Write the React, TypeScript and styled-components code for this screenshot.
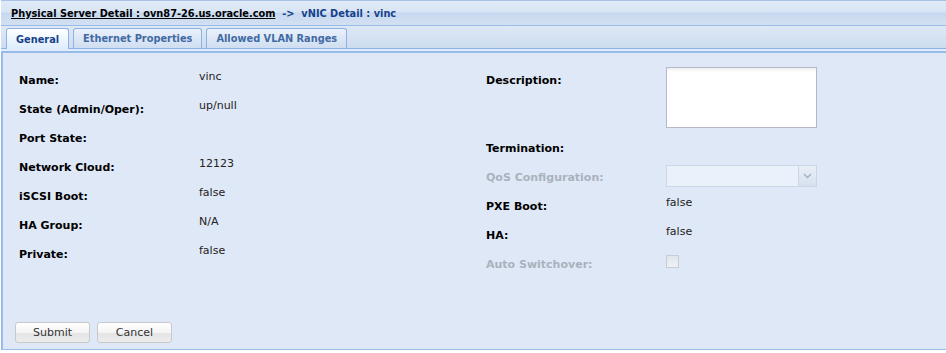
import React from 'react'
import styled, { createGlobalStyle, css } from 'styled-components'

const GlobalStyle = createGlobalStyle`
  html, body {
    margin: 0;
    padding: 0;
    background: #ffffff;
  }
  body {
    font-family: "DejaVu Sans", Verdana, sans-serif;
  }
`

const Page = styled.div`
  width: 946px;
  height: 353px;
  display: flex;
  flex-direction: column;
  overflow: hidden;
`

const Header = styled.div`
  height: 24px;
  border-top: 1px solid #a9c3e6;
  border-bottom: 1px solid #99bbe8;
  margin-left: 1px;
  background: linear-gradient(#e0eaf7 0%, #d9e5f5 45%, #c6d8ef 50%, #d3e0f2 100%);
  display: flex;
  align-items: center;
  padding-left: 10px;
  font-size: 9.8px;
  font-weight: bold;
  white-space: pre;
`

const CrumbLink = styled.a`
  color: #000000;
  text-decoration: underline;
`

const CrumbCurrent = styled.span`
  color: #15428b;
`

const TabStrip = styled.div`
  height: 21px;
  margin-left: 1px;
  padding: 1px 0 0 5px;
  display: flex;
  align-items: flex-end;
  gap: 4px;
  background: linear-gradient(#dfe9f6, #cddcef);
  border-bottom: 1px solid #8db2e3;
`

const Tab = styled.div<{ $active?: boolean }>`
  height: 19px;
  padding: 0 9px;
  display: flex;
  align-items: center;
  font-size: 9.8px;
  font-weight: bold;
  color: #416aa3;
  border: 1px solid #8db2e3;
  border-bottom: none;
  border-radius: 3px 3px 0 0;
  background: linear-gradient(#eaf1fb, #cfdef1);
  ${(p) =>
    p.$active &&
    css`
      color: #15428b;
      background: linear-gradient(#ffffff, #deecfd);
      height: 20px;
      margin-bottom: -1px;
    `}
`

const TabGap = styled.div`
  height: 2px;
  margin-left: 1px;
  background: #deecfd;
  border-bottom: 2px solid #99bbe8;
`

const Body = styled.div`
  flex: 1;
  margin: 0 0 3px 1px;
  border-left: 2px solid #99bbe8;
  border-bottom: 1px solid #99bbe8;
  background: #dfe8f6;
  display: flex;
  flex-direction: column;
  padding: 14px 0 6px 12px;
`

const Columns = styled.div`
  flex: 1;
  display: grid;
  grid-template-columns: 467px 1fr;
`

const Column = styled.div`
  display: flex;
  flex-direction: column;
  padding-left: 4px;
`

const Row = styled.div<{ $height?: number }>`
  display: grid;
  grid-template-columns: 180px 1fr;
  height: ${(p) => p.$height ?? 29}px;
`

const Label = styled.div<{ $disabled?: boolean }>`
  padding-top: 7px;
  font-size: 11px;
  font-weight: bold;
  color: ${(p) => (p.$disabled ? '#a9b2bd' : '#000000')};
`

const Value = styled.div`
  padding-top: 3px;
  font-size: 11px;
  color: #222222;
`

const TextArea = styled.textarea`
  box-sizing: border-box;
  width: 151px;
  height: 61px;
  border: 1px solid #b5b8c8;
  background: #ffffff linear-gradient(#eeeeee, #ffffff 4px);
  resize: none;
  margin: 0;
  outline: none;
`

const Select = styled.div`
  box-sizing: border-box;
  width: 151px;
  height: 22px;
  margin-top: 1px;
  border: 1px solid #cbd7e6;
  background: #eaf1fb;
  display: flex;
  justify-content: flex-end;
`

const SelectTrigger = styled.div`
  width: 17px;
  border-left: 1px solid #cbd7e6;
  background: linear-gradient(#e9eff7, #d6e0ec);
  display: flex;
  align-items: center;
  justify-content: center;
`

const CheckBox = styled.div`
  box-sizing: border-box;
  width: 13px;
  height: 13px;
  margin-top: 4px;
  border: 1px solid #c5cdd6;
  background: linear-gradient(#dfe5ec, #eef2f6);
`

const Buttons = styled.div`
  display: flex;
  gap: 7px;
`

const Button = styled.button`
  box-sizing: border-box;
  width: 75px;
  height: 21px;
  border: 1px solid #c9c9c9;
  border-radius: 3px;
  background: linear-gradient(#ffffff 0%, #f4f4f4 50%, #e4e4e4 51%, #ececec 100%);
  font-family: "DejaVu Sans", Verdana, sans-serif;
  font-size: 11px;
  color: #333333;
  padding: 0;
`

const leftRows = [
  ['Name:', 'vinc'],
  ['State (Admin/Oper):', 'up/null'],
  ['Port State:', ''],
  ['Network Cloud:', '12123'],
  ['iSCSI Boot:', 'false'],
  ['HA Group:', 'N/A'],
  ['Private:', 'false'],
]

export default function App() {
  return (
    <Page>
      <GlobalStyle />
      <Header>
        <CrumbLink>Physical Server Detail : ovn87-26.us.oracle.com</CrumbLink>
        <CrumbCurrent>{'  ->  vNIC Detail : vinc'}</CrumbCurrent>
      </Header>
      <TabStrip>
        <Tab $active>General</Tab>
        <Tab>Ethernet Properties</Tab>
        <Tab>Allowed VLAN Ranges</Tab>
      </TabStrip>
      <TabGap />
      <Body>
        <Columns>
          <Column>
            {leftRows.map(([label, value]) => (
              <Row key={label}>
                <Label>{label}</Label>
                <Value>{value}</Value>
              </Row>
            ))}
          </Column>
          <Column>
            <Row $height={68}>
              <Label>Description:</Label>
              <div>
                <TextArea />
              </div>
            </Row>
            <Row>
              <Label>Termination:</Label>
              <Value />
            </Row>
            <Row>
              <Label $disabled>QoS Configuration:</Label>
              <Select>
                <SelectTrigger>
                  <svg width="9" height="6" viewBox="0 0 9 6">
                    <path d="M1 1 L4.5 4.5 L8 1" fill="none" stroke="#9fb0c6" strokeWidth="1.4" />
                  </svg>
                </SelectTrigger>
              </Select>
            </Row>
            <Row>
              <Label>PXE Boot:</Label>
              <Value>false</Value>
            </Row>
            <Row>
              <Label>HA:</Label>
              <Value>false</Value>
            </Row>
            <Row>
              <Label $disabled>Auto Switchover:</Label>
              <CheckBox />
            </Row>
          </Column>
        </Columns>
        <Buttons>
          <Button>Submit</Button>
          <Button>Cancel</Button>
        </Buttons>
      </Body>
    </Page>
  )
}
